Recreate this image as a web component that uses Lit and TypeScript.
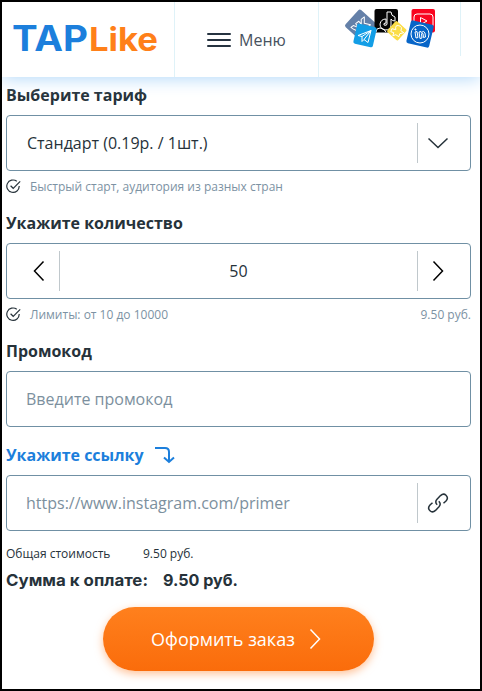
import { LitElement, html, svg, css } from "lit";
import { customElement } from "lit/decorators.js";

const check = html`<svg class="check" width="16" height="16" viewBox="0 0 16 16">
  <path d="M10.8 2.3A6.2 6.2 0 1 0 13.2 7" /><path d="M4.6 6.8 7.2 9.3 14.2 2.3" />
</svg>`;

@customElement("order-header")
class OrderHeader extends LitElement {
  static styles = css`
    :host { display: flex; height: 75px; background: #fff; box-shadow: 0 2px 16px #b5dafa; position: relative; clip-path: inset(0 0 -24px 0); }
    .logo { box-sizing: border-box; width: 173px; border-right: 1px solid #dff2f8; }
    .menu { box-sizing: border-box; width: 144px; border-right: 1px solid #dff2f8; display: flex; align-items: center; padding-left: 32px; gap: 8px; font-size: 16px; color: #47525e; }
    .bars { width: 24px; height: 14px; box-sizing: border-box; display: flex; flex-direction: column; justify-content: space-between; }
    .bars i { height: 2px; background: #263340; border-radius: 1px; }
    .social { width: 141px; height: 54px; border-right: 1px solid #dff2f8; }
    svg { display: block; }
    .logo text { font: 700 36px "Inter", sans-serif; }
    .a { fill: #1c7fdc; }
    .b { fill: #ff8019; }
    .ln { fill: none; stroke: #fff; stroke-width: 1; stroke-linejoin: round; }
  `;
  render() {
    return html`
      <div class="logo"><svg width="172" height="75">
        <text class="a" x="10" y="49" textLength="76" lengthAdjust="spacingAndGlyphs" style="font-size:35px">TAP</text>
        <text class="b" x="87" y="49" textLength="69" lengthAdjust="spacingAndGlyphs" style="font-size:32px">Like</text>
      </svg></div>
      <div class="menu"><span class="bars"><i></i><i></i><i></i></span><span>Меню</span></div>
      <div class="social"><svg width="141" height="54" viewBox="319 2 141 54">
        ${svg`
        <g transform="translate(360.5 25)"><rect x="-11.5" y="-11.5" width="23" height="23" rx="2" fill="#6480a8" transform="rotate(42)"/>
          <path class="ln" transform="rotate(-38)" d="M-9-4h3l3 5v-5h4v4l3-4h4l-4 5 4 5H4L1 2v4h-3Q-7 4-9-4Z"/></g>
        <rect x="374.5" y="9" width="23.5" height="23.5" rx="2" fill="#050505"/>
        <path class="ln" d="M387 12h4q0 4 4 5v4q-3 0-4-2v6q0 5-6 5-5-1-5-6 1-5 6-5v4q-3 0-2 2 3 1 3-1Z"/>
        <path class="ln" d="M376 32q0-4 4-4t6 4"/>
        <rect x="411.5" y="9" width="23.5" height="23.5" rx="2" fill="#f9041f"/>
        <rect class="ln" x="414" y="14" width="19" height="14" rx="3"/><path class="ln" d="M420.5 17.5 427 21l-6.500 3.500Z"/>
        <g transform="translate(365 35.500)"><rect x="-10" y="-10.200" width="20" height="20.400" rx="2" fill="#139ee6" transform="rotate(13)"/>
          <path class="ln" d="M-7 0 6-5 3 7-1 4-3 6V1ZM-3 1 6-5-1 4"/></g>
        <g transform="translate(396.800 30.700)"><rect x="-7.300" y="-7.300" width="14.600" height="14.600" rx="1.500" fill="#fbdd48" transform="rotate(42)"/>
          <path class="ln" d="M-5-2-1-1Q-2-6 2-5T4 0L7 2 3 3 2 6-1 4-4 5-3 2-6 1Z"/></g>
        <g transform="translate(420 34)"><rect x="-11.700" y="-11.700" width="23.400" height="23.400" rx="2" fill="#0765c8" transform="rotate(13)"/>
          <circle class="ln" r="9"/><path class="ln" d="M-5-2l2-.500 1 6-2 .500ZM-5-5h1v1h-1ZM-1-2l2-.500.300 1Q4-4 5-1l.500 4-2 .500-.500-4q-1-1-1.500.500l.500 4-2 .500Z"/></g>`}
      </svg></div>`;
  }
}

@customElement("app-root")
class AppRoot extends LitElement {
  static styles = css`
    :host { display: block; box-sizing: border-box; width: 482px; height: 691px; border: 2px solid #000; background: #fff; overflow: hidden; font-family: "Open Sans", "Noto Sans", sans-serif; color: #26323a; }
    .form { padding: 6px 9px 0 4px; }
    .label { height: 24px; line-height: 24px; margin-bottom: 8px; font-size: 16px; font-weight: 700; display: flex; align-items: center; }
    .link { color: #1c7fdc; gap: 11px; }
    .box { box-sizing: border-box; height: 56px; border: 1px solid #7090a4; border-radius: 4px; display: flex; align-items: center; font-size: 16px; margin-bottom: 8px; }
    .value { flex: 1; padding-left: 20px; }
    .value.center { padding: 0; text-align: center; }
    .hint { color: #7c909e; padding-left: 19px; }
    .side { box-sizing: border-box; height: 40px; width: 53px; border-left: 1px solid #c0c8cc; display: flex; align-items: center; padding-left: 8px; }
    .side.left { border-left: 0; border-right: 1px solid #c0c8cc; padding-left: 20px; }
    .note { height: 16px; line-height: 16px; margin-bottom: 16px; display: flex; align-items: center; font-size: 12px; color: #7c92a3; }
    .note span { margin-left: 8px; }
    .note .sum { margin-left: auto; }
    .gap { margin-bottom: 16px; }
    svg { display: block; fill: none; stroke: #26323a; stroke-width: 1.5; flex: none; }
    .check { stroke-width: 1.2; }
    .blue { stroke: #1c7fdc; stroke-width: 2; }
    .dark { stroke: #000; }
    .total { height: 16px; line-height: 16px; margin-top: 15px; font-size: 12px; display: flex; }
    .total span:first-child { width: 137px; }
    .pay { margin-top: 7px; stroke: none; fill: #26323a; font: 700 16px "Inter", sans-serif; }
    .btn { margin: 14px auto 0 97px; width: 271px; height: 64px; border: 0; border-radius: 32px; background: linear-gradient(#ff801d, #fa6c0b); box-shadow: 0 3px 9px #ff9a5499; color: #fff; font: 18px "Open Sans", "Noto Sans", sans-serif; display: flex; align-items: center; padding: 0 0 0 48px; gap: 14px; }
    .btn svg { stroke: #fff; }
  `;
  render() {
    return html`
      <order-header></order-header>
      <div class="form">
        <div class="label">Выберите тариф</div>
        <div class="box"><div class="value">Стандарт (0.19р. / 1шт.)</div>
          <div class="side"><svg width="24" height="24"><path d="M2.500 7.500 12 16.500 21.500 7.500"/></svg></div></div>
        <div class="note">${check}<span>Быстрый старт, аудитория из разных стран</span></div>
        <div class="label">Укажите количество</div>
        <div class="box"><div class="side left"><svg class="dark" width="24" height="24"><path d="M16.500 2.500 7.500 12 16.500 21.500"/></svg></div>
          <div class="value center">50</div>
          <div class="side"><svg class="dark" width="24" height="24"><path d="M7.500 2.500 16.500 12 7.500 21.500"/></svg></div></div>
        <div class="note">${check}<span>Лимиты: от 10 до 10000</span><span class="sum">9.50 руб.</span></div>
        <div class="label">Промокод</div>
        <div class="box gap"><div class="value hint">Введите промокод</div></div>
        <div class="label link">Укажите ссылку <svg class="blue" width="20" height="18"><path d="M0 2h10q4 0 4 4v10M9 11.500l5 4.500 5-4.500"/></svg></div>
        <div class="box"><div class="value hint">https://www.instagram.com/primer</div>
          <div class="side"><svg width="24" height="24"><path d="M11.200 13.800Q8.500 11 11 8.200L14.500 4.600Q17.500 1.800 20 4.200 22.800 7 20 10L17.500 12.300M12.800 10.200Q15.500 13 13 15.800L9.500 19.400Q6.500 22.200 4 19.800 1.200 17 4 14L6.500 11.700"/></svg></div></div>
        <div class="total"><span>Общая стоимость</span><span>9.50 руб.</span></div>
        <svg class="pay" width="300" height="24"><text x="0" y="17" textLength="142" lengthAdjust="spacingAndGlyphs">Сумма к оплате:</text><text x="157" y="17" textLength="75" lengthAdjust="spacingAndGlyphs">9.50 руб.</text></svg>
        <button class="btn"><span>Оформить заказ</span><svg width="12" height="24"><path d="M1.500 2.500 10.500 12 1.500 21.500"/></svg></button>
      </div>`;
  }
}
